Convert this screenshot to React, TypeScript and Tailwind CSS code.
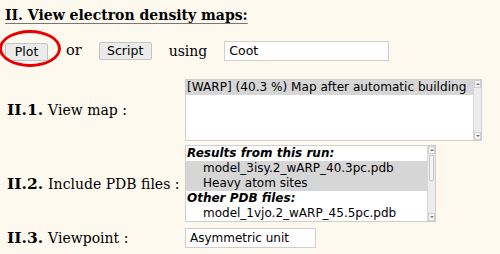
import React from 'react';

const serif = { fontFamily: '"DejaVu Serif", "Liberation Serif", serif' };
const sans = { fontFamily: '"DejaVu Sans", "Liberation Sans", sans-serif' };

interface Option {
  label: string;
  group?: boolean;
  selected?: boolean;
}

const pdbOptions: Option[] = [
  { label: 'Results from this run:', group: true },
  { label: 'model_3isy.2_wARP_40.3pc.pdb', selected: true },
  { label: 'Heavy atom sites', selected: true },
  { label: 'Other PDB files:', group: true },
  { label: 'model_1vjo.2_wARP_45.5pc.pdb' },
];

function Scrollbar({ thumb }: { thumb?: boolean }) {
  return (
    <div className="flex flex-col w-[8px] bg-[#ececec] border-l border-[#d8d8d8]">
      <div className="h-[8px] flex items-center justify-center bg-[#f4f4f4] border border-[#cfcfcf]">
        <div className="w-0 h-0 border-l-[2px] border-r-[2px] border-b-[2px] border-l-transparent border-r-transparent border-b-[#777]" />
      </div>
      <div className="flex-1 px-[1px] py-[1px]">
        {thumb && <div className="h-[26px] bg-[#f2f2f2] border border-[#c8c8c8] rounded-[1px]" />}
      </div>
      <div className="h-[8px] flex items-center justify-center bg-[#f4f4f4] border border-[#cfcfcf]">
        <div className="w-0 h-0 border-l-[2px] border-r-[2px] border-t-[2px] border-l-transparent border-r-transparent border-t-[#777]" />
      </div>
    </div>
  );
}

function Label({ num, text }: { num: string; text: string }) {
  return (
    <div className="pl-[7px] whitespace-nowrap text-black" style={serif}>
      <span className="font-bold text-[15.5px]">{num}</span>
      <span className="text-[14px] ml-[5px]">{text}</span>
    </div>
  );
}

export default function App() {
  return (
    <div className="w-[500px] h-[254px] bg-[#fdf9ef] overflow-hidden relative">
      {/* Heading */}
      <div className="pl-[5px] pt-[3px] h-[40px]" style={serif}>
        <span className="font-bold text-[14px] text-black underline decoration-[#777] underline-offset-[3px]">
          II. View electron density maps:
        </span>
      </div>

      {/* Buttons row */}
      <div className="flex items-center h-[22px] text-black" style={serif}>
        <div className="relative ml-[5px]">
          <button
            className="w-[43px] h-[18px] bg-[#ebebeb] border border-[#c4c4c4] rounded-[2px] text-[12.5px] leading-none"
            style={sans}
          >
            Plot
          </button>
          <div className="absolute left-[-6px] top-[-9px] w-[62px] h-[37px] border-[3px] border-[#e60000] rounded-[50%]" />
        </div>
        <span className="ml-[18px] text-[14.5px]">or</span>
        <button
          className="ml-[17px] w-[53px] h-[18px] bg-[#ebebeb] border border-[#c4c4c4] rounded-[2px] text-[12.5px] leading-none"
          style={sans}
        >
          Script
        </button>
        <span className="ml-[17px] text-[14px]">using</span>
        <div
          className="ml-[17px] w-[165px] h-[20px] bg-white border border-[#cfcfcf] pl-[4px] text-[12.5px] leading-[18px]"
          style={sans}
        >
          Coot
        </div>
      </div>

      {/* Parameter rows */}
      <div className="grid grid-cols-[185px_auto] items-center gap-y-[4px] mt-[17px]">
        <Label num="II.1." text="View map :" />
        <div className="flex w-[297px] h-[62px] bg-white border border-[#cfcfcf]" style={sans}>
          <div className="flex-1 overflow-hidden">
            <div className="h-[15px] pl-[1px] bg-[#d6d6d6] text-[12.1px] leading-[15px] whitespace-nowrap text-black">
              [WARP] (40.3 %) Map after automatic building
            </div>
          </div>
          <Scrollbar />
        </div>

        <Label num="II.2." text="Include PDB files :" />
        <div className="flex w-[251px] h-[77px] bg-white border border-[#cfcfcf]" style={sans}>
          <div className="flex-1 overflow-hidden text-black">
            {pdbOptions.map((o) => (
              <div
                key={o.label}
                className={`h-[15px] leading-[15px] whitespace-nowrap text-[12px] ${
                  o.group ? 'font-bold italic pl-[1px]' : 'pl-[17px]'
                } ${o.selected ? 'bg-[#d6d6d6]' : ''}`}
              >
                {o.label}
              </div>
            ))}
          </div>
          <Scrollbar thumb />
        </div>

        <Label num="II.3." text="Viewpoint :" />
        <div
          className="w-[131px] h-[20px] bg-white border border-[#cfcfcf] pl-[4px] text-[12px] leading-[18px] text-black"
          style={sans}
        >
          Asymmetric unit
        </div>
      </div>
    </div>
  );
}
